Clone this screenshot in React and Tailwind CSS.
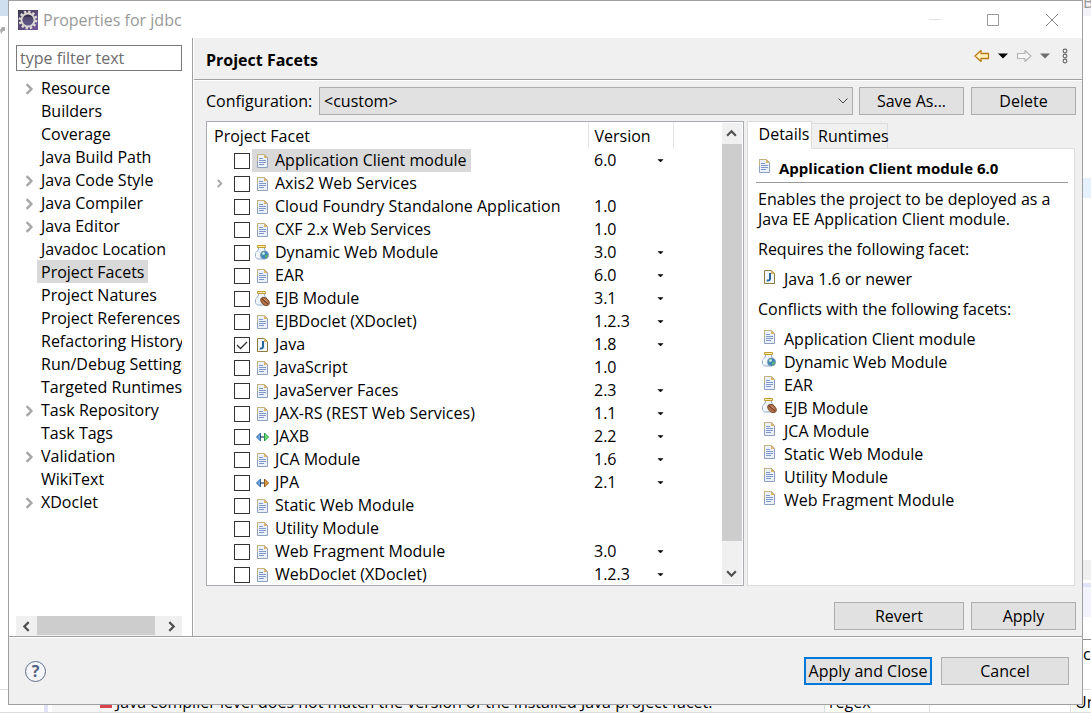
import React, { useState } from "react";

const TREE = [
  ["Resource", true],
  ["Builders", false],
  ["Coverage", false],
  ["Java Build Path", false],
  ["Java Code Style", true],
  ["Java Compiler", true],
  ["Java Editor", true],
  ["Javadoc Location", false],
  ["Project Facets", false],
  ["Project Natures", false],
  ["Project References", false],
  ["Refactoring History", false],
  ["Run/Debug Settings", false],
  ["Targeted Runtimes", false],
  ["Task Repository", true],
  ["Task Tags", false],
  ["Validation", true],
  ["WikiText", false],
  ["XDoclet", true],
];

const FACETS = [
  { name: "Application Client module", icon: "doc", version: "6.0", menu: true },
  { name: "Axis2 Web Services", icon: "doc", expandable: true },
  { name: "Cloud Foundry Standalone Application", icon: "doc", version: "1.0" },
  { name: "CXF 2.x Web Services", icon: "doc", version: "1.0" },
  { name: "Dynamic Web Module", icon: "web", version: "3.0", menu: true },
  { name: "EAR", icon: "doc", version: "6.0", menu: true },
  { name: "EJB Module", icon: "ejb", version: "3.1", menu: true },
  { name: "EJBDoclet (XDoclet)", icon: "doc", version: "1.2.3", menu: true },
  { name: "Java", icon: "java", version: "1.8", menu: true, checked: true },
  { name: "JavaScript", icon: "doc", version: "1.0" },
  { name: "JavaServer Faces", icon: "doc", version: "2.3", menu: true },
  { name: "JAX-RS (REST Web Services)", icon: "doc", version: "1.1", menu: true },
  { name: "JAXB", icon: "jaxb", version: "2.2", menu: true },
  { name: "JCA Module", icon: "doc", version: "1.6", menu: true },
  { name: "JPA", icon: "jpa", version: "2.1", menu: true },
  { name: "Static Web Module", icon: "doc" },
  { name: "Utility Module", icon: "doc" },
  { name: "Web Fragment Module", icon: "doc", version: "3.0", menu: true },
  { name: "WebDoclet (XDoclet)", icon: "doc", version: "1.2.3", menu: true },
];

const CONFLICTS = [
  ["Application Client module", "doc"],
  ["Dynamic Web Module", "web"],
  ["EAR", "doc"],
  ["EJB Module", "ejb"],
  ["JCA Module", "doc"],
  ["Static Web Module", "doc"],
  ["Utility Module", "doc"],
  ["Web Fragment Module", "doc"],
];

function DocShape() {
  return (
    <>
      <path d="M3.5 1.5h7l3 3v10h-10z" fill="#eaf1fb" stroke="#8e9fc4" />
      <path d="M3.5 8V1.5h7" fill="none" stroke="#c3b27c" />
      <path d="M10 1l4 4h-4z" fill="#dcb568" />
      <path d="M5 5.5h4M5 7.5h7M5 9.5h7M5 11.5h5" stroke="#7f97c9" />
    </>
  );
}

function Jar() {
  return (
    <>
      <path d="M4.5 2.5v1.500c0 1.500-3 2.500-3 6c0 2.500 1 4 3 4h5c2.500 0 3.500-2 3.500-4.500c0-3-2.500-4-2.500-5.500V2.500z" fill="#edf4fb" stroke="#92a9c8" />
      <path d="M3.5 7c-1 2-1 4 0 5.5" fill="none" stroke="#ffffff" strokeWidth="1.5" />
      <path d="M3.5.5h8v2h-8z" fill="#fff0b8" stroke="#c79a2d" />
    </>
  );
}

function FacetIcon({ kind }) {
  return (
    <svg viewBox="0 0 16 16" className="size-4 shrink-0" aria-hidden="true">
      {kind === "doc" && <DocShape />}
      {kind === "java" && (
        <>
          <path d="M3.5 1.5h7l3 3v10h-10z" fill="#f2f7fd" stroke="#8d7a3f" />
          <path d="M10 1l4 4h-4z" fill="#d9b55f" />
          <path d="M9 4v5.5c0 1.7-.8 2.3-3.2 2" fill="none" stroke="#27659c" strokeWidth="2" />
        </>
      )}
      {kind === "web" && (
        <>
          <Jar />
          <circle cx="10.5" cy="10" r="4" fill="#3d86c4" stroke="#7d93ad" strokeWidth=".8" />
          <path d="M8.5 7.5l2-1 .5 2-1.5 1.5-2 .5zM11.5 9.5l2.5.5-1 2.5-2 .8z" fill="#5fb45d" />
          <circle cx="9.5" cy="8.5" r="1.300" fill="#d5ecf8" />
        </>
      )}
      {kind === "ejb" && (
        <>
          <Jar />
          <ellipse cx="11" cy="10.5" rx="5" ry="3.4" transform="rotate(42 11 10.5)" fill="#b06f46" stroke="#6f3f20" strokeWidth=".8" />
          <path d="M7.8 7.8c2 .2 2 2.5 3.3 2.8s1.700 1.200 2.700 2.600" fill="none" stroke="#532b14" />
          <path d="M9.5 7.8l3.5 3" stroke="#dba77e" strokeWidth=".8" />
        </>
      )}
      {(kind === "jaxb" || kind === "jpa") && (
        <>
          <path d="M6.5 4v8L2.5 8z" fill="#6fa6df" stroke="#2d66a3" />
          <path d="M6 8h5" stroke="#233f60" strokeWidth="1.2" />
          <path
            d="M10.5 4v8l4-4z"
            fill={kind === "jaxb" ? "#6ee070" : "#dd9b3c"}
            stroke={kind === "jaxb" ? "#27984a" : "#8e5a1b"}
          />
        </>
      )}
    </svg>
  );
}

const CHEVRONS = {
  right: "M3 1l4 4-4 4",
  left: "M7 1L3 5l4 4",
  up: "M1 7l4-4 4 4",
  down: "M1 3l4 4 4-4",
};

function Chevron({ dir, className }) {
  return (
    <svg viewBox="0 0 10 10" className={className} aria-hidden="true">
      <path d={CHEVRONS[dir]} fill="none" stroke="currentColor" strokeWidth="2" />
    </svg>
  );
}

function EclipseIcon() {
  return (
    <svg viewBox="0 0 20 20" className="size-5 shrink-0" aria-hidden="true">
      <defs>
        <linearGradient id="tile" x1="0" y1="0" x2="1" y2="1">
          <stop offset="0" stopColor="#3b3a50" />
          <stop offset="1" stopColor="#77589f" />
        </linearGradient>
        <linearGradient id="core" x1="0" y1="0" x2="0" y2="1">
          <stop offset="0" stopColor="#2a2440" />
          <stop offset="1" stopColor="#6a5f92" />
        </linearGradient>
      </defs>
      <path d="M0 0h20v20H0z" fill="url(#tile)" />
      <circle cx="10" cy="10" r="8.2" fill="none" stroke="#e2dfd8" strokeWidth="2.4" strokeDasharray="2.3 1.993" />
      <circle cx="10" cy="10" r="6.5" fill="url(#core)" stroke="#d9d6d0" strokeWidth="2" />
      <path d="M5 8h10M4.5 10h11M5 12h10" stroke="#7a719c" strokeWidth=".6" />
    </svg>
  );
}

function PushButton({ children, className = "" }) {
  return (
    <button type="button" className={`h-7 shrink-0 border border-[#adadad] bg-[#e1e1e1] ${className}`}>
      {children}
    </button>
  );
}

function Workbench() {
  return (
    <div className="absolute inset-0 flex flex-col justify-between overflow-hidden bg-white" aria-hidden="true">
      <div className="flex h-4 justify-between bg-[#f3f3f9]">
        <div className="w-2 bg-[#cfdff0]" />
        <div className="-mt-2 w-2 text-[#999999]">B</div>
      </div>
      <div className="flex flex-1 justify-between">
        <svg viewBox="0 0 8 16" className="mt-2 h-4 w-2">
          <path d="M0 6l2-3h3v4H3l-2 3z" fill="#aaaaaa" />
        </svg>
        <div className="flex w-2 flex-col">
          <div className="mt-[162px] h-5 bg-[#e5f1fd]" />
          <div className="mt-[362px] h-5 bg-[#efefef]" />
          <div className="mt-[3px] h-1 bg-[#dfe3f5]" />
          <div className="h-[30px] bg-[#f3f4fb]" />
          <div className="mt-[22px] h-px bg-[#909090]" />
          <div className="mt-1">c</div>
        </div>
      </div>
      <div className="flex h-6 border-y border-[#dcdcdc] pl-[44px]">
        <div className="w-1 bg-[#dfe3f5]" />
        <div className="ml-1 flex flex-1 items-center bg-[#f5f5f5] pt-[2px] pl-12">
          <span className="mr-1 size-3 bg-[#d9434c]" />
          Java compiler level does not match the version of the installed Java project facet.
        </div>
        <div className="w-[105px] border-l border-[#dcdcdc] pt-[2px] pl-1">regex</div>
        <div className="w-[141px] border-l border-[#dcdcdc]" />
        <div className="w-[21px] border-l border-[#dcdcdc] pt-[2px] pl-1">Un</div>
      </div>
    </div>
  );
}

function Sidebar() {
  const [selected, setSelected] = useState("Project Facets");
  return (
    <aside className="flex w-[184px] shrink-0 flex-col border-r border-[#a0a0a0] bg-white pt-[7px] pr-[10px] pl-[7px]">
      <input
        type="text"
        aria-label="Filter properties"
        placeholder="type filter text"
        className="h-[26px] w-full border border-[#7a7a7a] px-[3px] outline-none placeholder:text-[#6d6d6d]"
      />
      <ul className="mt-[5px] flex-1 overflow-hidden">
        {TREE.map(([name, expandable]) => (
          <li key={name} className="flex h-[23px] items-center">
            <span className="flex w-[21px] shrink-0 justify-center pt-[2px] pl-[5px]">
              {expandable && <Chevron dir="right" className="size-3 text-[#a6a6a6]" />}
            </span>
            <button
              type="button"
              onClick={() => setSelected(name)}
              className={`h-[23px] px-1 leading-[22px] whitespace-nowrap ${selected === name ? "bg-[#d9d9d9]" : ""}`}
            >
              {name}
            </button>
          </li>
        ))}
      </ul>
      <div className="flex h-5 items-center bg-[#f0f0f0]">
        <button type="button" aria-label="Scroll left" className="flex h-full w-[21px] items-center justify-center">
          <Chevron dir="left" className="size-[11px] text-[#505050]" />
        </button>
        <div className="mr-[6px] h-[19px] flex-1 self-start bg-[#cdcdcd]" />
        <button type="button" aria-label="Scroll right" className="flex h-full w-[21px] items-center justify-center">
          <Chevron dir="right" className="size-[11px] text-[#505050]" />
        </button>
      </div>
    </aside>
  );
}

function NavTools() {
  return (
    <div className="flex items-center pb-[5px]">
      <button type="button" aria-label="Back">
        <svg viewBox="0 0 16 14" className="h-[14px] w-4">
          <path d="M1 7l6-5.5v3h7.5v5H7v3z" fill="#fff0c0" stroke="#bb7d16" strokeWidth="1.3" strokeLinejoin="round" />
        </svg>
      </button>
      <button type="button" aria-label="Back history" className="ml-2">
        <svg viewBox="0 0 10 6" className="h-[6px] w-[10px]">
          <path d="M0 .5h10L5 5.5z" fill="#000000" />
        </svg>
      </button>
      <button type="button" aria-label="Forward" className="ml-2">
        <svg viewBox="0 0 16 14" className="h-[14px] w-4">
          <path d="M15 7L9 1.5v3H1.5v5H9v3z" fill="#f6f6f6" stroke="#b5b5b5" strokeWidth="1.2" strokeLinejoin="round" />
        </svg>
      </button>
      <button type="button" aria-label="Forward history" className="ml-2">
        <svg viewBox="0 0 10 6" className="h-[6px] w-[10px]">
          <path d="M0 .5h10L5 5.5z" fill="#6d6d6d" />
        </svg>
      </button>
      <button type="button" aria-label="View menu" className="ml-3">
        <svg viewBox="0 0 6 16" className="h-4 w-[6px]">
          <g fill="none" stroke="#666666" strokeWidth="1.1">
            <circle cx="3" cy="3" r="1.9" />
            <circle cx="3" cy="8" r="1.9" />
            <circle cx="3" cy="13" r="1.9" />
          </g>
        </svg>
      </button>
    </div>
  );
}

function FacetRow({ facet, selected }) {
  return (
    <tr className="h-[23px]">
      <td className="p-0">
        <div className="flex h-[23px] items-center">
          <span className="flex w-[27px] shrink-0 items-center pl-2">
            {facet.expandable && <Chevron dir="right" className="size-[9px] text-[#a6a6a6]" />}
          </span>
          <label className="flex h-[23px] items-center whitespace-nowrap">
            <span className="mr-[2px] grid size-4">
              <input
                type="checkbox"
                defaultChecked={facet.checked}
                className="peer col-start-1 row-start-1 size-4 appearance-none border border-[#333333] bg-white"
              />
              <svg viewBox="0 0 16 16" className="pointer-events-none invisible col-start-1 row-start-1 size-4 peer-checked:visible" aria-hidden="true">
                <path d="M3 8l3.5 3.5L13 5" fill="none" stroke="#333333" strokeWidth="1.3" />
              </svg>
            </span>
            <span className={`flex h-[23px] items-center gap-[5px] pr-1 pl-[2px] ${selected ? "bg-[#d9d9d9]" : ""}`}>
              <FacetIcon kind={facet.icon} />
              <span className="pb-[2px]">{facet.name}</span>
            </span>
          </label>
        </div>
      </td>
      <td className="p-0">
        <div className="flex h-[23px] items-center pl-[6px]">
          <span className="w-[63px] pb-[2px]">{facet.version}</span>
          {facet.menu && (
            <button type="button" aria-label={`Change version of ${facet.name}`}>
              <svg viewBox="0 0 7 4" className="h-1 w-[7px]">
                <path d="M1 .5h5L3.5 3z" fill="#000000" stroke="#000000" strokeWidth=".5" />
              </svg>
            </button>
          )}
        </div>
      </td>
      <td />
    </tr>
  );
}

function FacetTable() {
  return (
    <div className="flex min-w-0 flex-1 border border-[#a8abb0] bg-white">
      <div className="min-w-0 flex-1 overflow-hidden">
        <table className="-mb-px w-full table-fixed border-collapse">
          <colgroup>
            <col className="w-[381px]" />
            <col className="w-[85px]" />
            <col />
          </colgroup>
          <thead>
            <tr className="h-[27px]">
              <th className="border-r border-[#e5e5e5] p-0 pl-[7px] text-left font-normal">Project Facet</th>
              <th className="border-r border-[#e5e5e5] p-0 pl-[6px] text-left font-normal">Version</th>
              <th aria-label="Spacer" />
            </tr>
          </thead>
          <tbody>
            {FACETS.map((facet, i) => (
              <FacetRow key={facet.name} facet={facet} selected={i === 0} />
            ))}
          </tbody>
        </table>
      </div>
      <div className="my-px mr-px flex w-5 shrink-0 flex-col bg-[#f0f0f0]">
        <button type="button" aria-label="Scroll up" className="flex h-[21px] items-center justify-center pr-[2px]">
          <Chevron dir="up" className="size-[11px] text-[#505050]" />
        </button>
        <div className="mb-[21px] flex-1 bg-[#cdcdcd]" />
        <button type="button" aria-label="Scroll down" className="flex h-[22px] items-center justify-center pr-[2px]">
          <Chevron dir="down" className="size-[11px] text-[#505050]" />
        </button>
      </div>
    </div>
  );
}

function DetailItem({ name, icon }) {
  return (
    <li className="flex h-[23px] items-start gap-[7px] pt-px pl-[3px]">
      <FacetIcon kind={icon} />
      <span className="leading-[21px]">{name}</span>
    </li>
  );
}

function DetailsPane() {
  return (
    <section className="flex w-[328px] shrink-0 flex-col">
      <div role="tablist" className="flex h-[27px] items-end">
        <button type="button" role="tab" aria-selected="true" className="z-10 -mb-px h-7 w-[65px] border border-b-0 border-[#dcdcdc] bg-white pb-[3px] pl-[9px]">
          Details
        </button>
        <button type="button" role="tab" aria-selected="false" className="h-[25px] w-[76px] border-t border-r border-[#dcdcdc] pl-[6px]">
          Runtimes
        </button>
      </div>
      <div role="tabpanel" className="flex-1 border border-[#dcdcdc] bg-white pt-[9px] pr-[6px] pl-2">
        <h2 className="flex h-[25px] items-start border-b border-[#9a9a9a] text-[15px] font-bold">
          <FacetIcon kind="doc" />
          <span className="ml-[7px] leading-5">Application Client module 6.0</span>
        </h2>
        <div className="px-[2px]">
          <p className="mt-[6px] leading-5">Enables the project to be deployed as a Java EE Application Client module.</p>
          <p className="mt-[10px] leading-5">Requires the following facet:</p>
          <ul className="mt-[9px]">
            <DetailItem name="Java 1.6 or newer" icon="java" />
          </ul>
          <p className="mt-2 leading-5">Conflicts with the following facets:</p>
          <ul className="mt-[9px]">
            {CONFLICTS.map(([name, icon]) => (
              <DetailItem key={name} name={name} icon={icon} />
            ))}
          </ul>
        </div>
      </div>
    </section>
  );
}

export default function App() {
  return (
    <div className="relative flex min-h-screen px-2 pb-2 font-['Open_Sans','Noto_Sans',sans-serif] text-base leading-5 text-black">
      <Workbench />
      <main className="relative flex min-w-0 flex-1 flex-col border border-[#a0a0a4] bg-[#f0f0f0]">
        <header className="flex h-[37px] items-center bg-white pl-[9px] text-[#999999]">
          <EclipseIcon />
          <h1 className="ml-[5px] flex-1">Properties for jdbc</h1>
          <button type="button" aria-label="Minimize" className="flex w-[58px] justify-center">
            <svg viewBox="0 0 12 12" className="size-3">
              <path d="M0 5.5h12" stroke="#e2e2e2" />
            </svg>
          </button>
          <button type="button" aria-label="Maximize" className="flex w-[58px] justify-center">
            <svg viewBox="0 0 12 12" className="size-3">
              <path d="M.5.5h11v11H.5z" fill="none" stroke="#999999" />
            </svg>
          </button>
          <button type="button" aria-label="Close" className="flex w-[60px] justify-center">
            <svg viewBox="0 0 12 12" className="size-3">
              <path d="M0 0l12 12M12 0L0 12" stroke="#888888" />
            </svg>
          </button>
        </header>
        <div className="flex flex-1 border-b border-[#a0a0a0]">
          <Sidebar />
          <div className="flex min-w-0 flex-1 flex-col border-l border-white">
            <div className="flex h-[42px] items-center justify-between border-b border-[#a0a0a0] pr-[14px] pl-3">
              <h2 className="pt-[2px] font-bold">Project Facets</h2>
              <NavTools />
            </div>
            <div className="flex flex-1 flex-col border-t border-white pt-[6px] pr-[6px] pb-[6px] pl-3">
              <div className="flex items-center">
                <label htmlFor="configuration" className="w-[113px] shrink-0">
                  Configuration:
                </label>
                <div className="relative min-w-0 flex-1">
                  <select id="configuration" className="block h-7 w-full appearance-none border border-[#adadad] bg-[#e1e1e1] pl-1">
                    <option>&lt;custom&gt;</option>
                  </select>
                  <svg viewBox="0 0 10 6" className="pointer-events-none absolute top-[11px] right-[5px] h-[6px] w-[10px]" aria-hidden="true">
                    <path d="M.5.5L5 5 9.5.5" fill="none" stroke="#444444" />
                  </svg>
                </div>
                <PushButton className="ml-[6px] w-[105px]">Save As...</PushButton>
                <PushButton className="ml-[7px] w-[105px]">Delete</PushButton>
              </div>
              <div className="mt-[6px] mr-px flex flex-1 gap-[3px]">
                <FacetTable />
                <DetailsPane />
              </div>
              <div className="mt-4 flex justify-end gap-[7px]">
                <PushButton className="w-[130px]">Revert</PushButton>
                <PushButton className="w-[105px]">Apply</PushButton>
              </div>
            </div>
          </div>
        </div>
        <footer className="flex h-[67px] items-center border-t border-white pr-[13px] pl-4">
          <button type="button" aria-label="Help" className="flex size-[21px] items-center justify-center rounded-full border border-[#5f708c] bg-[#f3f5f8] font-bold text-[#52627f]">
            ?
          </button>
          <span className="flex-1" />
          <button type="button" className="h-7 w-32 border-2 border-[#0078d7] bg-[#e1e1e1] whitespace-nowrap">
            Apply and Close
          </button>
          <PushButton className="ml-[9px] w-32">Cancel</PushButton>
        </footer>
      </main>
    </div>
  );
}
